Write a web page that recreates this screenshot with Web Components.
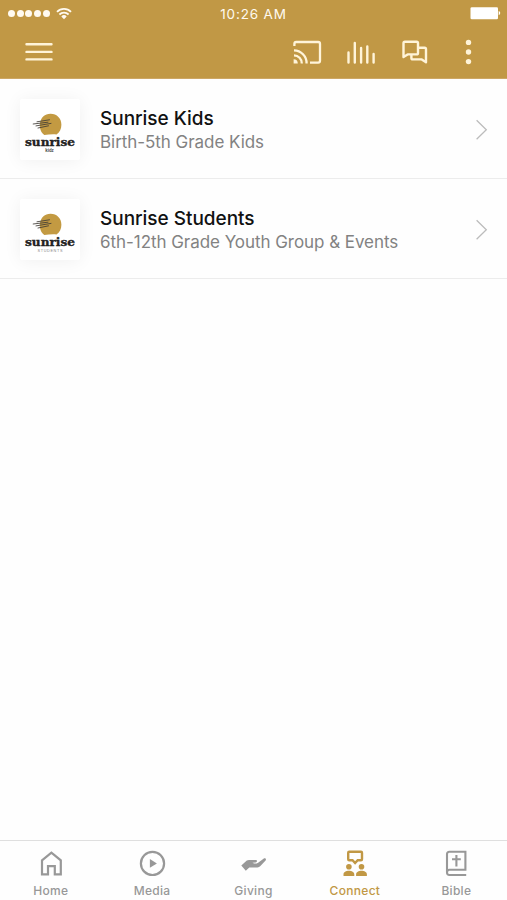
<!DOCTYPE html>
<html lang="en">
<head>
<meta charset="utf-8">
<meta name="viewport" content="width=device-width, initial-scale=1">
<title>Connect</title>
<style>
  html, body { height: 100%; margin: 0; }
  body {
    font-family: Inter, "Liberation Sans", sans-serif;
    background: #fefefe;
    --gold: #c19845;
    --muted: #989898;
  }
</style>
</head>
<body>
<sr-app>
  <sr-status-bar slot="header" time="10:26 AM"></sr-status-bar>
  <sr-toolbar slot="header"></sr-toolbar>
  <sr-row heading="Sunrise Kids"><sr-logo slot="thumb" sub="kidz"></sr-logo>Birth-5th Grade Kids</sr-row>
  <sr-row heading="Sunrise Students"><sr-logo slot="thumb" sub="STUDENTS"></sr-logo>6th-12th Grade Youth Group &amp; Events</sr-row>
  <sr-tab slot="tabs" icon="home">Home</sr-tab>
  <sr-tab slot="tabs" icon="media">Media</sr-tab>
  <sr-tab slot="tabs" icon="giving">Giving</sr-tab>
  <sr-tab slot="tabs" icon="connect" active>Connect</sr-tab>
  <sr-tab slot="tabs" icon="bible">Bible</sr-tab>
</sr-app>

<script>
// name -> [width, height, markup]; everything is drawn in currentColor
const ICONS = {
  menu: [28, 20, `<path d="M1.5 2.3h25M1.5 9.9h25M1.5 17.4h25" stroke="currentColor" stroke-width="2.4" stroke-linecap="round"/>`],
  cast: [29, 25, `<g fill="none" stroke="currentColor" stroke-width="2.3">
    <path d="M1.4 6V3.8Q1.4 2 3.2 2H25.2Q27 2 27 3.8V20.8Q27 22.6 25.2 22.6H17"/>
    <path d="M1 10.4A12.8 12.8 0 0 1 13.6 23.4M1 15.3A8 8 0 0 1 8.8 23.4"/></g>
    <path d="M.6 19.2a4.3 4.3 0 0 1 4.2 4.2H.6z" fill="currentColor"/>`],
  levels: [28, 23, `<path d="M1.5 11.5v10M7.8 2v19.5M14.1 7v14.5M20.3 5.5v16M26.6 13v8.5" stroke="currentColor" stroke-width="2.4" stroke-linecap="round"/>`],
  chat: [26, 24, `<g fill="none" stroke="currentColor" stroke-width="2.4" stroke-linejoin="round">
    <path d="M5.6 14.4 1.5 17V3.2Q1.5 1.8 2.9 1.8H14.6Q16 1.8 16 3.2V13Q16 14.4 14.6 14.4H5.6z"/>
    <path d="M16 7.8H22.6Q24 7.8 24 9.2V22.2L19.8 19.4H10.8Q9.4 19.4 9.4 18V14.6"/></g>`],
  more: [8, 26, `<g fill="currentColor"><circle cx="4.5" cy="3.4" r="2.7"/><circle cx="4.5" cy="13" r="2.7"/><circle cx="4.5" cy="22.6" r="2.7"/></g>`],
  wifi: [16, 12, `<g fill="none" stroke="currentColor" stroke-width="1.8">
    <path d="M1 3.8a10 10 0 0 1 14 0M3.4 6.5a6.6 6.6 0 0 1 9.2 0"/></g>
    <path d="M5.3 8.4a3.9 3.9 0 0 1 5.4 0L8 11.3z" fill="currentColor"/>`],
  battery: [31, 13, `<rect width="27.5" height="12" x=".5" y=".2" rx="1.3" fill="currentColor"/><path d="M28.7 4a2.2 2.2 0 0 1 0 4.2z" fill="currentColor"/>`],
  chevron: [12, 20, `<path d="M.6 .2 10.3 9.8 .6 19.2" fill="none" stroke="currentColor" stroke-width="1.3"/>`],
  home: [26, 26, `<path d="M4 10.3 13.4 2.6l9.4 7.7v14h-6v-8.2h-6.8v8.2H4z" fill="none" stroke="currentColor" stroke-width="2.2"/>`],
  media: [26, 26, `<circle cx="13.5" cy="13.4" r="11.6" fill="none" stroke="currentColor" stroke-width="2.2"/><path d="M10.9 9v8.8l7-4.4z" fill="currentColor"/>`],
  giving: [26, 26, `<path d="M.3 15.4 5.8 10.6Q6.7 9.9 8 9.9h6.7c1.8 0 1.7 2.3 0 2.5l-3.2.4c1 1 4 1 5.6-.1l5.4-4c1.6-1 3.2.4 2.1 1.9l-5.2 5.4c-1.3 1.2-2.6 1.6-4.4 1.6H8.3L4.8 20.8z" fill="currentColor"/>`],
  connect: [26, 26, `<path d="M7.2 1.8h11.8q1 0 1 1v6.4q0 1-1 1h-3.3L13.1 13l-2.6-2.8H7.2q-1 0-1-1V2.8q0-1 1-1z" fill="none" stroke="currentColor" stroke-width="2.4"/>
    <g fill="currentColor"><circle cx="6.9" cy="16.8" r="2.8"/><circle cx="19.5" cy="16.8" r="2.8"/>
    <path d="M1.5 26v-1.6c0-2.4 2.6-3.7 5.4-3.7s5.4 1.3 5.4 3.7V26zM14.1 26v-1.6c0-2.4 2.6-3.7 5.4-3.7s5.4 1.3 5.4 3.7V26z"/></g>`],
  bible: [26, 26, `<g fill="none" stroke="currentColor" stroke-width="2.1">
    <path d="M23.2 25H6.4Q4 25 4 22.4V4.2Q4 1.8 6.4 1.8H22.4V19.8H6.4Q4 19.8 4 22.4"/>
    <path d="M13.4 5v11.4M9 9.3h8.8"/></g>`],
};

function defineElement(name, render) {
  customElements.define(name, class extends HTMLElement {
    constructor() {
      super();
      this.attachShadow({ mode: "open" });
    }
    connectedCallback() {
      this.shadowRoot.innerHTML = render(this);
    }
  });
}

defineElement("sr-icon", (el) => {
  const [w, h, body] = ICONS[el.getAttribute("name")];
  return `
    <style>:host { display: block; flex: none; } svg { display: block; overflow: visible; }</style>
    <svg width="${w}" height="${h}" viewBox="0 0 ${w} ${h}" fill="none" aria-hidden="true">${body}</svg>`;
});

defineElement("sr-status-bar", (el) => `
  <style>
    :host { display: grid; grid-template-columns: 1fr auto 1fr; align-items: center; height: 27px; padding: 0 6px 0 8px; color: #fffaf0; }
    .signal { display: flex; align-items: center; gap: 1.7px; }
    .signal i { width: 7px; height: 7px; border-radius: 50%; background: currentColor; }
    .signal sr-icon { margin-left: 5px; }
    .time { margin-right: 2px; font-size: 13.5px; letter-spacing: .85px; line-height: 16px; }
    .battery { justify-self: end; color: #fff; }
  </style>
  <div class="signal"><i></i><i></i><i></i><i></i><i></i><sr-icon name="wifi"></sr-icon></div>
  <span class="time">${el.getAttribute("time")}</span>
  <sr-icon class="battery" name="battery"></sr-icon>`);

defineElement("sr-toolbar", () => `
  <style>
    :host { display: flex; align-items: center; height: 50px; padding: 0 35px 1px 25px; color: #fff4d9; }
    .actions { display: flex; align-items: center; margin-left: auto; gap: 26px; }
    .actions sr-icon:last-child { margin-left: 10px; }
    sr-icon[name="levels"] { margin: 0 1px 0 -1px; }
  </style>
  <sr-icon name="menu"></sr-icon>
  <div class="actions">
    <sr-icon name="cast"></sr-icon>
    <sr-icon name="levels"></sr-icon>
    <sr-icon name="chat"></sr-icon>
    <sr-icon name="more"></sr-icon>
  </div>`);

// Sun with a cloud scribble over the wordmark and the ministry name
defineElement("sr-logo", (el) => {
  const sub = el.getAttribute("sub");
  const subText = sub === "kidz"
    ? `<text x="25.3" y="53.2" textLength="8.5" lengthAdjust="spacingAndGlyphs" font-size="4.6" font-weight="700" fill="#444">${sub}</text>`
    : `<text x="17.5" y="53" textLength="25" font-size="3.8" fill="#888">${sub}</text>`;
  return `
    <style>
      :host { display: block; width: 60px; height: 61px; background: #fff; border-radius: 2px; box-shadow: 0 1px 18px rgba(0,0,0,.06); }
      svg { display: block; overflow: visible; font-family: "Liberation Sans", sans-serif; }
      .word { font: 700 11px "DejaVu Serif", "Liberation Serif", serif; }
    </style>
    <svg width="60" height="61" viewBox="0 0 60 61">
      <path d="M24.3 36C16.8 30.6 18.7 14.8 30.5 14.8c6.5 0 10.9 4.8 10.9 10.9 0 4.2-1.8 7.9-4.9 9.7-3.8-.6-8 0-12.2.6z" fill="#c39a42"/>
      <path d="M17 22.8 29.5 20.8M13.2 25 28 23.2M16 26.9 31 24.4M18 29 28.5 26.8" stroke="#403b35" stroke-width=".85" stroke-linecap="round"/>
      <text class="word" x="5" y="47.3" textLength="50" lengthAdjust="spacingAndGlyphs" fill="#222" stroke="#222" stroke-width=".35">sunrise</text>
      ${subText}
    </svg>`;
});

defineElement("sr-row", (el) => `
  <style>
    :host { display: flex; align-items: center; box-sizing: border-box; height: 100px; padding: 2px 19px 0 20px; border-bottom: 1px solid #ececec; }
    .body { flex: 1; margin: 2px 0 0 20px; }
    .heading { margin: 0; font-size: 19px; font-weight: 500; line-height: 24px; letter-spacing: -.03px; color: #111; }
    .detail { font-size: 17px; line-height: 23px; letter-spacing: -.05px; color: #828282; white-space: nowrap; }
    .next { color: #bcbcbc; }
  </style>
  <slot name="thumb"></slot>
  <div class="body">
    <h2 class="heading">${el.getAttribute("heading")}</h2>
    <div class="detail"><slot></slot></div>
  </div>
  <sr-icon class="next" name="chevron"></sr-icon>`);

defineElement("sr-tab", (el) => `
  <style>
    :host { display: flex; flex: 1; flex-direction: column; align-items: center; padding-top: 9px; color: var(--muted); }
    :host([active]) { color: var(--gold); }
    .label { margin-top: 7px; font-size: 12px; font-weight: 500; line-height: 16px; letter-spacing: .3px; }
  </style>
  <sr-icon name="${el.getAttribute("icon")}"></sr-icon>
  <span class="label"><slot></slot></span>`);

defineElement("sr-app", () => `
  <style>
    :host { display: flex; flex-direction: column; height: 100vh; overflow: hidden; }
    header { background: var(--gold); height: 78px; border-bottom: 1px solid #cda765; }
    main { flex: 1; }
    nav { display: flex; box-sizing: border-box; height: 60px; border-top: 1px solid #dfdfdf; }
  </style>
  <header><slot name="header"></slot></header>
  <main><slot></slot></main>
  <nav><slot name="tabs"></slot></nav>`);
</script>
</body>
</html>
